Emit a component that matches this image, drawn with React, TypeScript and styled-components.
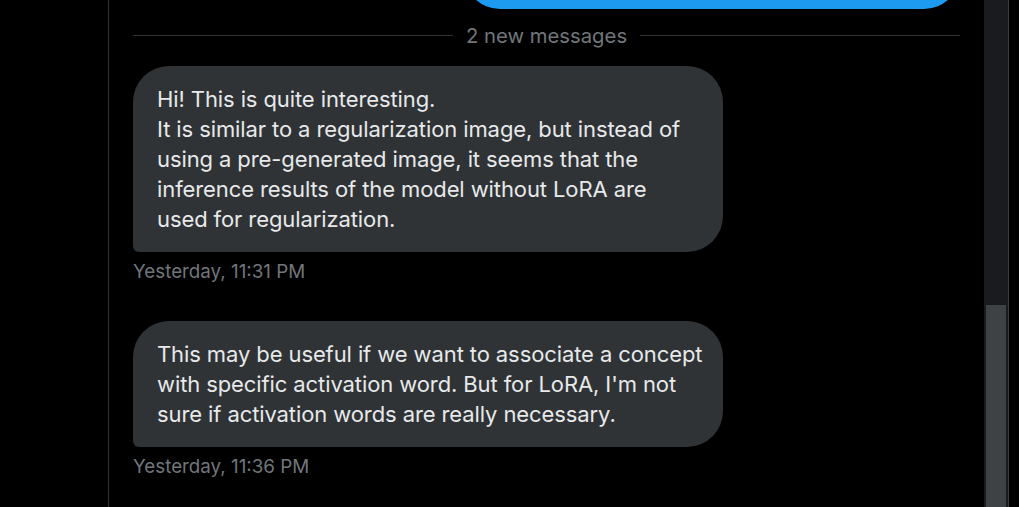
import * as React from 'react'
import styled, { createGlobalStyle } from 'styled-components'

// line breaks follow the wrapping of the original thread
const messages = [
  {
    id: 1,
    text:
      'Hi! This is quite interesting.\nIt is similar to a regularization image, but instead of\nusing a pre-generated image, it seems that the\ninference results of the model without LoRA are\nused for regularization.',
    time: 'Yesterday, 11:31 PM'
  },
  {
    id: 2,
    text:
      "This may be useful if we want to associate a concept\nwith specific activation word. But for LoRA, I'm not\nsure if activation words are really necessary.",
    time: 'Yesterday, 11:36 PM'
  }
]

const App = () => {
  return (
    <Page>
      <GlobalStyle />
      <Sidebar />
      <Conversation>
        <MessageList>
          <SentBubble />
          <Divider>
            <Rule />
            <DividerLabel>2 new messages</DividerLabel>
            <Rule />
          </Divider>
          {messages.map(message => (
            <Entry key={message.id}>
              <ReceivedBubble>{message.text}</ReceivedBubble>
              <Timestamp>{message.time}</Timestamp>
            </Entry>
          ))}
        </MessageList>
        <ScrollTrack thumbTop={305}>
          <ScrollThumb />
        </ScrollTrack>
        <Gutter />
      </Conversation>
    </Page>
  )
}

const GlobalStyle = createGlobalStyle`
  html, body {
    margin: 0;
    padding: 0;
    background: #000;
    overflow: hidden;
  }
`

const Page = styled.div`
  display: flex;
  height: 507px;
  background: #000;
  font-family: Inter, 'Noto Sans', sans-serif;
`

const Sidebar = styled.div`
  width: 108px;
  flex-shrink: 0;
`

const Conversation = styled.div`
  flex: 1;
  display: flex;
  border-left: 1px solid #2f3336;
`

const MessageList = styled.div`
  flex: 1;
  display: flex;
  flex-direction: column;
  justify-content: flex-end;
  overflow: hidden;
  padding: 0 24px 28px;
`

const SentBubble = styled.div`
  align-self: flex-end;
  flex-shrink: 0;
  width: 496px;
  height: 96px;
  border-radius: 36px;
  background: #1d9bf0;
`

const Divider = styled.div`
  flex-shrink: 0;
  display: flex;
  align-items: center;
  gap: 13px;
  height: 31px;
  margin: 11px 0 15px;
`

const Rule = styled.div`
  flex: 1;
  height: 1px;
  background: #2f3336;
`

const DividerLabel = styled.span`
  color: #71767b;
  font-size: 20.3px;
  line-height: 30px;
`

const Entry = styled.div`
  flex-shrink: 0;
  display: flex;
  flex-direction: column;
  align-items: flex-start;

  & + & {
    margin-top: 37px;
  }
`

const ReceivedBubble = styled.div`
  box-sizing: border-box;
  width: 590px;
  padding: 18px 24px;
  border-radius: 36px 36px 36px 6px;
  background: #2f3336;
  color: #e7e9ea;
  font-size: 22px;
  letter-spacing: -0.1px;
  line-height: 30px;
  white-space: pre;
`

const Timestamp = styled.div`
  margin-top: 8px;
  color: #71767b;
  font-size: 18.8px;
  line-height: 24px;
`

const ScrollTrack = styled.div<{ thumbTop: number }>`
  width: 25px;
  display: flex;
  flex-direction: column;
  padding-top: ${p => p.thumbTop}px;
  box-sizing: border-box;
  background: #1a1b1e;
  border-right: 1px solid #3a3d40;
`

const ScrollThumb = styled.div`
  flex: 1;
  margin: 0 2px;
  background: #3f4245;
`

const Gutter = styled.div`
  width: 10px;
`

export default App
